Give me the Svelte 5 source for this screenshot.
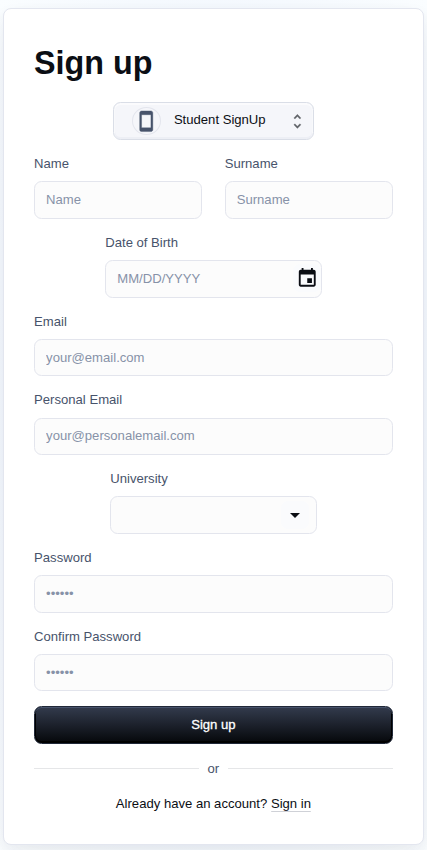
<script>
  const emails = [
    { label: 'Email', placeholder: 'your@email.com' },
    { label: 'Personal Email', placeholder: 'your@personalemail.com' }
  ];
  const passwords = ['Password', 'Confirm Password'];
</script>

<main class="page">
  <form class="card" onsubmit={(e) => e.preventDefault()}>
    <h1>Sign up</h1>

    <button type="button" class="select">
      <span class="avatar">
        <svg width="22.5" height="22.5" viewBox="0 0 24 24" fill="#47536b" stroke="#47536b" stroke-width="0.4"><path d="M17 1.01 7 1c-1.1 0-2 .9-2 2v18c0 1.1.9 2 2 2h10c1.1 0 2-.9 2-2V3c0-1.1-.9-1.99-2-1.99zM17 19H7V5h10v14z" /></svg>
      </span>
      <span class="select-text">Student SignUp</span>
      <svg class="unfold" width="18.8" height="18.8" viewBox="0 0 24 24" fill="#606368" stroke="#606368" stroke-width="0.3"><path d="M12 5.83 15.17 9l1.41-1.41L12 3 7.41 7.59 8.83 9 12 5.83zm0 12.34L8.83 15l-1.41 1.41L12 21l4.59-4.59L15.17 15 12 18.17z" /></svg>
    </button>

    <div class="row">
      {#each ['Name', 'Surname'] as name}
        <label class="field">
          <span class="label">{name}</span>
          <span class="box"><input type="text" placeholder={name} /></span>
        </label>
      {/each}
    </div>

    <label class="field date">
      <span class="label">Date of Birth</span>
      <span class="box">
        <input type="text" placeholder="MM/DD/YYYY" />
        <span class="adorn cal">
          <svg width="22.5" height="22.5" viewBox="0 0 24 24" fill="#0b0e14"><path d="M17 12h-5v5h5v-5zM16 1v2H8V1H6v2H5c-1.11 0-1.99.9-1.99 2L3 19c0 1.1.89 2 2 2h14c1.1 0 2-.9 2-2V5c0-1.1-.9-2-2-2h-1V1h-2zm3 18H5V8h14v11z" /></svg>
        </span>
      </span>
    </label>

    {#each emails as item}
      <label class="field">
        <span class="label">{item.label}</span>
        <span class="box"><input type="text" placeholder={item.placeholder} /></span>
      </label>
    {/each}

    <label class="field university">
      <span class="label">University</span>
      <span class="box">
        <input type="text" />
        <span class="adorn drop">
          <svg width="24" height="24" viewBox="0 0 24 24" fill="#0b0e14"><path d="m7 10 5 5 5-5z" /></svg>
        </span>
      </span>
    </label>

    {#each passwords as name}
      <label class="field">
        <span class="label">{name}</span>
        <span class="box"><input type="password" placeholder="••••••" /></span>
      </label>
    {/each}

    <button class="submit">Sign up</button>

    <div class="divider"><span>or</span></div>

    <p class="signin">Already have an account? <a href="#signin">Sign in</a></p>
  </form>
</main>

<style>
  :global(body) {
    margin: 0;
    overflow: hidden;
  }
  .page {
    box-sizing: border-box;
    height: 850px;
    padding: 8.4px 3.4px 0;
    font: 13.1px/18px 'Liberation Sans', Arial, sans-serif;
    color: #0b0e14;
    background: radial-gradient(ellipse at 50% 50%, #e6eefb, #fafdff);
  }
  .card {
    box-sizing: border-box;
    display: flex;
    flex-direction: column;
    height: 836.6px;
    padding: 29px 29.9px 0 29.7px;
    background: #fff;
    border: 1px solid #e3e6ef;
    border-radius: 8px;
    box-shadow: 0 5px 14px rgba(30, 41, 59, 0.05), 0 14px 33px -5px rgba(30, 41, 59, 0.05);
  }
  h1 {
    margin: 0 0 14px;
    height: 49.5px;
    font-size: 32.3px;
    line-height: 50px;
    font-weight: 700;
  }
  .select {
    box-sizing: border-box;
    display: flex;
    align-items: center;
    align-self: center;
    width: 201px;
    height: 38px;
    margin: 0 0 15.1px;
    padding: 1px 6.5px 0 18px;
    border: 1px solid #dadee7;
    border-radius: 7.5px;
    background: #f5f6fa;
    box-shadow: inset 0 1px 0 1px rgba(255, 255, 255, 0.6), inset 0 -1px 0 1px rgba(219, 222, 235, 0.3);
    font: inherit;
    color: inherit;
  }
  .avatar {
    box-sizing: border-box;
    display: flex;
    align-items: center;
    justify-content: center;
    width: 29px;
    height: 28px;
    border: 1px solid #e3e5ed;
    border-radius: 50%;
    flex: none;
  }
  .select-text {
    margin-left: 13px;
    padding-bottom: 3px;
    white-space: nowrap;
  }
  .unfold {
    margin-left: auto;
  }
  .row {
    display: flex;
    gap: 22.6px;
  }
  .row .field {
    flex: 1;
    min-width: 0;
  }
  .field {
    display: flex;
    flex-direction: column;
    margin-bottom: 15px;
  }
  .label {
    height: 26.2px;
    line-height: 18px;
    color: #47536b;
  }
  .box {
    box-sizing: border-box;
    display: flex;
    align-items: center;
    height: 37.6px;
    padding: 0 11px;
    border: 1px solid #e3e5ed;
    border-radius: 7.5px;
    background: #fcfcfc;
  }
  input {
    flex: 1;
    min-width: 0;
    width: 100%;
    padding: 0;
    border: 0;
    outline: 0;
    background: transparent;
    font: inherit;
    color: inherit;
  }
  input::placeholder {
    color: #8792a8;
    opacity: 1;
  }
  .adorn {
    display: flex;
    align-items: center;
    justify-content: center;
    flex: none;
    width: 28px;
    height: 28px;
    border-radius: 7px;
    background: #fafbfd;
  }
  .cal {
    margin-bottom: 1.5px;
  }
  .date {
    width: 217px;
    margin-left: 71.2px;
  }
  .date .box {
    padding-right: 0.5px;
  }
  .university {
    width: 207px;
    margin-left: 76.2px;
  }
  .university .box {
    padding-right: 7.5px;
  }
  .submit {
    box-sizing: border-box;
    height: 37.4px;
    flex: none;
    padding: 0 0 1px;
    border: 1px solid #202838;
    border-radius: 7.5px;
    background: linear-gradient(to bottom, #333b4d, #05070a);
    box-shadow: inset 0 1px 0 #47536b, inset 0 -1px 0 1px #000;
    font: inherit;
    -webkit-text-stroke: 0.3px #fff;
    color: #fff;
  }
  .divider {
    display: flex;
    align-items: center;
    gap: 9px;
    margin-top: 15.5px;
    height: 19px;
    color: #47536b;
  }
  .divider::before,
  .divider::after {
    content: '';
    flex: 1;
    height: 1px;
    background: #e5e6e8;
  }
  .signin {
    margin: 16.5px 0 0;
    text-align: center;
  }
  a {
    color: inherit;
    text-decoration: none;
    box-shadow: 0 1px 0 -0.2px #c3c6cd;
  }
</style>
